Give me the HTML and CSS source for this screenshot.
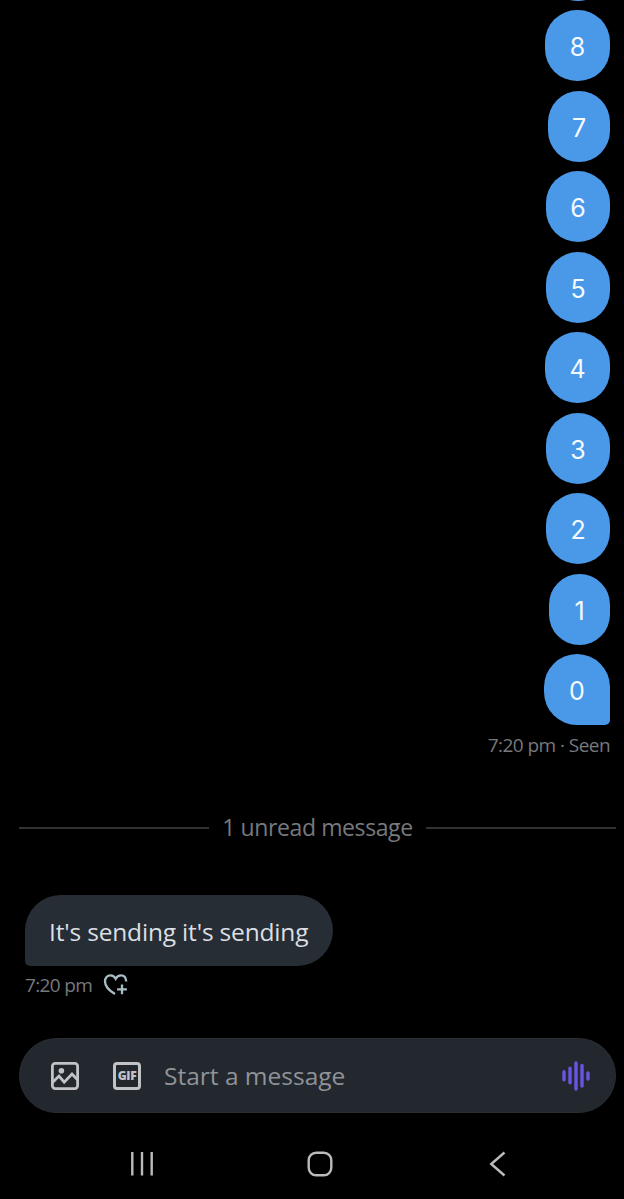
FILE: index.html
```
<!DOCTYPE html>
<html lang="en">
<head>
    <meta charset="UTF-8">
    <meta name="viewport" content="width=device-width, initial-scale=1.0">
    <title>Messages</title>
    <link rel="stylesheet" href="styles.css">
</head>
<body>

<main class="chat">
    <!-- Sent messages -->
    <section class="sent">
        <div class="bubble"></div>
        <div class="bubble eight">8</div>
        <div class="bubble seven">7</div>
        <div class="bubble">6</div>
        <div class="bubble">5</div>
        <div class="bubble four">4</div>
        <div class="bubble">3</div>
        <div class="bubble">2</div>
        <div class="bubble one">1</div>
        <div class="bubble last">0</div>
        <p class="meta">7:20 pm · Seen</p>
    </section>

    <div class="divider"><span>1 unread message</span></div>

    <!-- Received message -->
    <section class="received">
        <div class="reply">It's sending it's sending</div>
        <div class="reply-meta">
            <p class="meta">7:20 pm</p>
            <svg class="heart" width="26" height="24" viewBox="0 0 26 24">
                <path d="M12 20.9C6 17.5 2 13 2 8.5C2 4.8 4.4 2.3 7.4 2.3C9.9 2.3 11.6 3.7 12.7 5.8C13.8 3.7 15.5 2.3 18 2.3C20.8 2.3 23 4.5 23.2 8.5M19 11.5V21.3M14.1 16.4H23.9"/>
            </svg>
        </div>
    </section>
</main>

<footer class="composer">
    <svg class="photo" width="28" height="28" viewBox="0 0 28 28">
        <rect x="1.4" y="1.4" width="25.2" height="25.2" rx="2.8"/>
        <path d="M1.5 20.5L8 14L13.2 20.2L21 12L26.5 17.7"/>
        <circle cx="10.4" cy="8.7" r="2.8"/>
    </svg>
    <div class="gif">GIF</div>
    <span class="placeholder">Start a message</span>
    <svg class="voice" width="30" height="30" viewBox="0 0 30 30">
        <path d="M3 10.7V18.7M9 7.3V21.7M15 2V28M21 4.5V25M27 12V18"/>
    </svg>
</footer>

<nav class="navbar">
    <svg width="26" height="26" viewBox="0 0 26 26"><path d="M3.3 1V24.5M13 1V24.5M22.7 1V24.5"/></svg>
    <svg width="26" height="26" viewBox="0 0 26 26"><rect x="1.7" y="1.7" width="22.6" height="22.6" rx="7.5"/></svg>
    <svg width="26" height="26" viewBox="0 0 26 26"><path d="M19.5 1.5L6.2 13L19.5 24.5"/></svg>
</nav>

</body>
</html>
```
FILE: styles.css
```
* {
    box-sizing: border-box;
}

body {
    margin: 0;
    height: 1199px;
    overflow: hidden;
    background-color: #000;
    font-family: "Open Sans", sans-serif;
}

p {
    margin: 0;
}

.chat {
    display: flow-root;
    height: 1038px;
    padding: 0 8px 0 19px;
}

/* Sent messages */
.sent {
    display: flex;
    flex-direction: column;
    align-items: flex-end;
    gap: 9.5px;
    margin-top: -70.4px;
    padding-right: 6px;
}

.bubble {
    width: 64px;
    height: 71px;
    border-radius: 32px;
    background-color: #4a99e9;
    color: #f5faff;
    font-family: Inter, sans-serif;
    font-size: 25px;
    line-height: 74px;
    text-align: center;
}

.eight {
    width: 65px;
}

.seven {
    width: 62px;
}

.four {
    width: 65px;
}

.one {
    width: 61px;
}

.last {
    width: 66px;
    border-radius: 33px 33px 5px 33px;
}

.meta {
    color: #77797d;
    font-size: 19px;
    line-height: 24px;
    letter-spacing: -0.55px;
}

.sent .meta {
    margin-top: -1.5px;
}

/* Unread divider */
.divider {
    display: flex;
    align-items: center;
    gap: 13px;
    height: 40px;
    margin-top: 50.4px;
    color: #77797d;
    font-size: 23px;
    line-height: 38px;
    letter-spacing: -0.4px;
}

.divider span {
    margin-top: -1px;
}

.divider::before,
.divider::after {
    content: "";
    flex: 1;
    height: 2px;
    background-color: #303234;
}

/* Received message */
.received {
    margin-top: 47px;
    padding-left: 6px;
}

.reply {
    width: 308px;
    height: 71px;
    padding-left: 24px;
    border-radius: 35.5px 35.5px 35.5px 5px;
    background-color: #262d34;
    color: #dcdfe3;
    font-size: 24.5px;
    line-height: 73px;
    letter-spacing: -0.17px;
    white-space: nowrap;
}

.reply-meta {
    display: flex;
    align-items: center;
    gap: 11px;
    margin-top: 7px;
}

.reply-meta .meta {
    letter-spacing: -0.65px;
}

.heart {
    fill: none;
    stroke: #a9bdc5;
    stroke-width: 2.3;
}

/* Message box */
.composer {
    display: flex;
    align-items: center;
    height: 75px;
    margin: 0 8px 0 19px;
    padding: 0 24px 0 31px;
    border: 1px solid #2a2d31;
    border-radius: 37.5px;
    background-color: #23272e;
}

.photo {
    fill: none;
    stroke: #c1c3c7;
    stroke-width: 2.8;
}

.photo circle {
    fill: #c1c3c7;
    stroke: none;
}

.gif {
    width: 28px;
    height: 28px;
    margin: 0 23px 0 34px;
    border: 3px solid #c1c3c7;
    border-radius: 4px;
    color: #c1c3c7;
    font-size: 12px;
    font-weight: 800;
    line-height: 22px;
    letter-spacing: -0.3px;
    text-align: center;
}

.placeholder {
    color: #909398;
    font-size: 24.5px;
}

.voice {
    margin-left: auto;
    fill: none;
    stroke: #6a55e2;
    stroke-width: 3.4;
    stroke-linecap: round;
}

/* System buttons */
.navbar {
    display: flex;
    justify-content: space-between;
    margin-top: 38px;
    padding: 0 113px 0 129px;
}

.navbar svg {
    fill: none;
    stroke: #bbb;
    stroke-width: 2.4;
}
```
